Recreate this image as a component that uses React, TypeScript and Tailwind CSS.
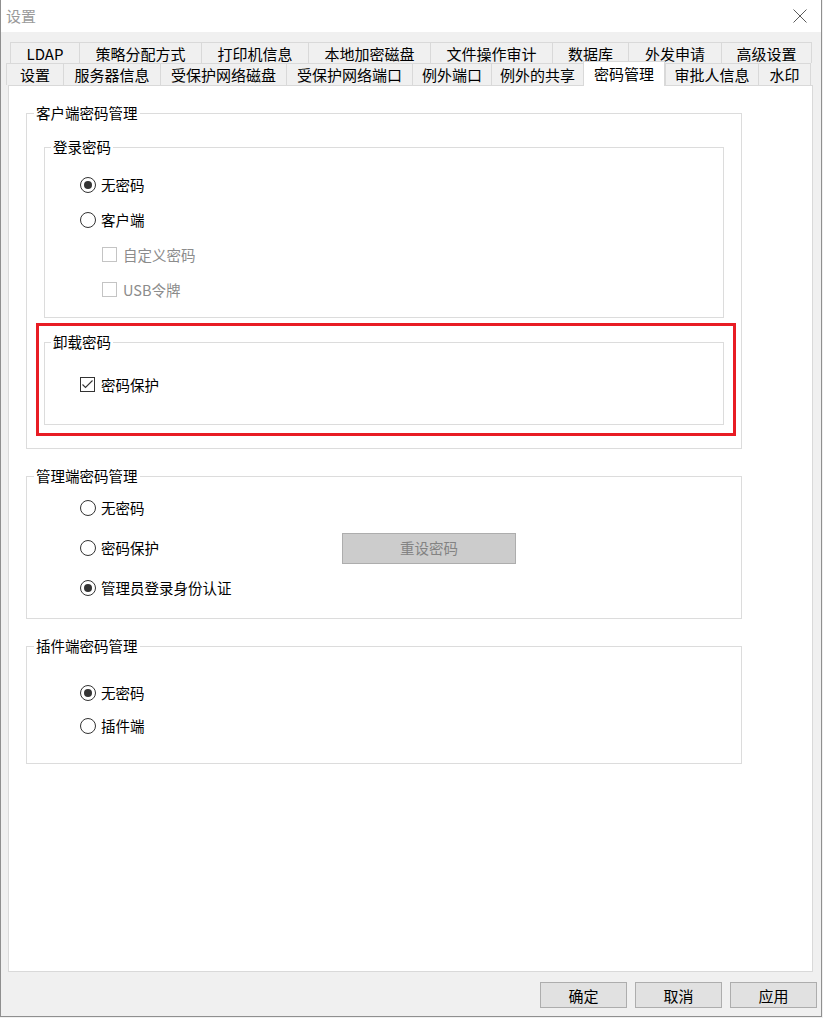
import React from "react"

const TOP_TABS = [
  { label: "LDAP", w: "w-[69px]" },
  { label: "策略分配方式", w: "w-[122px]" },
  { label: "打印机信息", w: "w-[107px]" },
  { label: "本地加密磁盘", w: "w-[122px]" },
  { label: "文件操作审计", w: "w-[122px]" },
  { label: "数据库", w: "w-[76px]" },
  { label: "外发申请", w: "w-[93px]" },
  { label: "高级设置", w: "w-[91px]" },
]

const FRONT_TABS = [
  { label: "设置", w: "w-[57px]" },
  { label: "服务器信息", w: "w-[97px]" },
  { label: "受保护网络磁盘", w: "w-[126px]" },
  { label: "受保护网络端口", w: "w-[126px]" },
  { label: "例外端口", w: "w-[79px]" },
  { label: "例外的共享", w: "w-[92px]" },
  { label: "密码管理", w: "w-[82px]", active: true },
  { label: "审批人信息", w: "w-[93px]" },
  { label: "水印", w: "w-[53px]" },
]

const Radio = ({ checked, label }: { checked?: boolean; label: string }) => (
  <div className="flex items-center">
    <span className="flex h-4 w-4 items-center justify-center rounded-full border border-[#333333] bg-white">
      {checked && <span className="h-2 w-2 rounded-full bg-[#333333]" />}
    </span>
    <span className="ml-[5px]">{label}</span>
  </div>
)

const Check = ({ checked, disabled, label }: { checked?: boolean; disabled?: boolean; label: string }) => (
  <div className="flex items-center">
    <span
      className={
        disabled
          ? "flex h-[15px] w-[15px] items-center justify-center border border-[#c4c4c4] bg-white"
          : "flex h-[15px] w-[15px] items-center justify-center border border-[#333333] bg-white"
      }
    >
      {checked && (
        <svg width="13" height="13" viewBox="0 0 13 13">
          <polyline points="1.5,6.5 4.5,9.5 11.5,2.5" fill="none" stroke="#333333" strokeWidth="1.1" />
        </svg>
      )}
    </span>
    <span className={disabled ? "ml-[6px] text-[#8c8c8c]" : "ml-[6px]"}>{label}</span>
  </div>
)

const Legend = ({ children, inner }: { children: React.ReactNode; inner?: boolean }) => (
  <legend className={inner ? "ml-[6px] px-[2px] leading-[20px]" : "ml-[7px] px-[2px] leading-[20px]"}>
    {children}
  </legend>
)

export default function App() {
  return (
    <div className="h-[1018px] w-[823px] overflow-hidden bg-[#f0f0f0] font-['Noto_Sans_CJK_SC','Microsoft_YaHei',sans-serif] text-black">
      <div className="flex h-[1017px] w-[822px] flex-col border-b border-l border-r border-[#8f8f8f]">
        {/* Title bar */}
        <div className="flex h-[32px] items-center justify-between bg-white pl-[5px] pr-[14px]">
          <span className="text-[15px] text-[#9a9a9a]">设置</span>
          <svg width="14" height="14" viewBox="0 0 14 14">
            <line x1="0.5" y1="0.5" x2="13.5" y2="13.5" stroke="#5a5a5a" strokeWidth="1" />
            <line x1="13.5" y1="0.5" x2="0.5" y2="13.5" stroke="#5a5a5a" strokeWidth="1" />
          </svg>
        </div>

        {/* Tabs */}
        <div className="mt-[10px] text-[15px]">
          <div className="ml-[9px] flex h-[21px]">
            {TOP_TABS.map((t, i) => (
              <div
                key={t.label}
                className={
                  (i === TOP_TABS.length - 1 ? "border-r " : "") +
                  t.w +
                  " flex h-[21px] items-center justify-center border-l border-t border-[#d9d9d9] leading-none"
                }
              >
                {t.label}
              </div>
            ))}
          </div>
          <div className="ml-[5px] flex h-[22px] items-start">
            {FRONT_TABS.map((t, i) =>
              t.active ? (
                <div
                  key={t.label}
                  className={t.w + " relative z-10 -mt-[2px] flex h-[25px] items-center justify-center border-l border-r border-t border-[#d9d9d9] bg-white pb-[2px] leading-none"}
                >
                  {t.label}
                </div>
              ) : (
                <div
                  key={t.label}
                  className={
                    (i === FRONT_TABS.length - 1 ? "border-r " : "") +
                    t.w +
                    " flex h-[22px] items-center justify-center border-l border-t border-[#d9d9d9] leading-none"
                  }
                >
                  {t.label}
                </div>
              )
            )}
          </div>
        </div>

        {/* Panel */}
        <div className="ml-[7px] h-[887px] w-[805px] border border-[#d9d9d9] bg-white pl-[17px] pt-[17px] text-[14.5px]">
          {/* 客户端密码管理 */}
          <fieldset className="w-[716px] border border-[#dcdcdc] pb-[12px]">
            <Legend>客户端密码管理</Legend>
            <fieldset className="ml-[17px] mt-[14px] w-[680px] border border-[#dcdcdc] pb-[10px] pt-[10px]">
              <Legend inner>登录密码</Legend>
              <div className="flex h-[35px] items-center pl-[35px]">
                <Radio checked label="无密码" />
              </div>
              <div className="flex h-[35px] items-center pl-[35px]">
                <Radio label="客户端" />
              </div>
              <div className="flex h-[35px] items-center pl-[57px]">
                <Check disabled label="自定义密码" />
              </div>
              <div className="flex h-[35px] items-center pl-[57px]">
                <Check disabled label="USB令牌" />
              </div>
            </fieldset>

            <div className="ml-[9px] mt-[5px] w-[700px] border-[3px] border-[#e81c24] pb-[8px] pl-[5px] pt-[6px]">
              <fieldset className="w-[680px] border border-[#dcdcdc] pb-[22px] pt-[15px]">
                <Legend inner>卸载密码</Legend>
                <div className="flex h-[35px] items-center pl-[35px]">
                  <Check checked label="密码保护" />
                </div>
              </fieldset>
            </div>
          </fieldset>

          {/* 管理端密码管理 */}
          <fieldset className="mt-[17px] w-[716px] border border-[#dcdcdc] pb-[10px] pt-[2px]">
            <Legend>管理端密码管理</Legend>
            <div className="flex h-[40px] items-center pl-[53px]">
              <Radio label="无密码" />
            </div>
            <div className="flex h-[40px] items-center pl-[53px]">
              <div className="w-[262px]">
                <Radio label="密码保护" />
              </div>
              <button className="h-[31px] w-[174px] border border-[#adadad] bg-[#cccccc] text-[14.5px] text-[#838383]">
                重设密码
              </button>
            </div>
            <div className="flex h-[40px] items-center pl-[53px]">
              <Radio checked label="管理员登录身份认证" />
            </div>
          </fieldset>

          {/* 插件端密码管理 */}
          <fieldset className="mt-[17px] w-[716px] border border-[#dcdcdc] pb-[21px] pt-[20px]">
            <Legend>插件端密码管理</Legend>
            <div className="flex h-[33px] items-center pl-[53px]">
              <Radio checked label="无密码" />
            </div>
            <div className="flex h-[33px] items-center pl-[53px]">
              <Radio label="插件端" />
            </div>
          </fieldset>
        </div>

        {/* Dialog buttons */}
        <div className="ml-[539px] mt-[10px] flex gap-[8px] text-[15px]">
          {["确定", "取消", "应用"].map((b) => (
            <button key={b} className="h-[26px] w-[87px] border border-[#adadad] bg-[#e1e1e1] leading-none">
              {b}
            </button>
          ))}
        </div>
      </div>
    </div>
  )
}
